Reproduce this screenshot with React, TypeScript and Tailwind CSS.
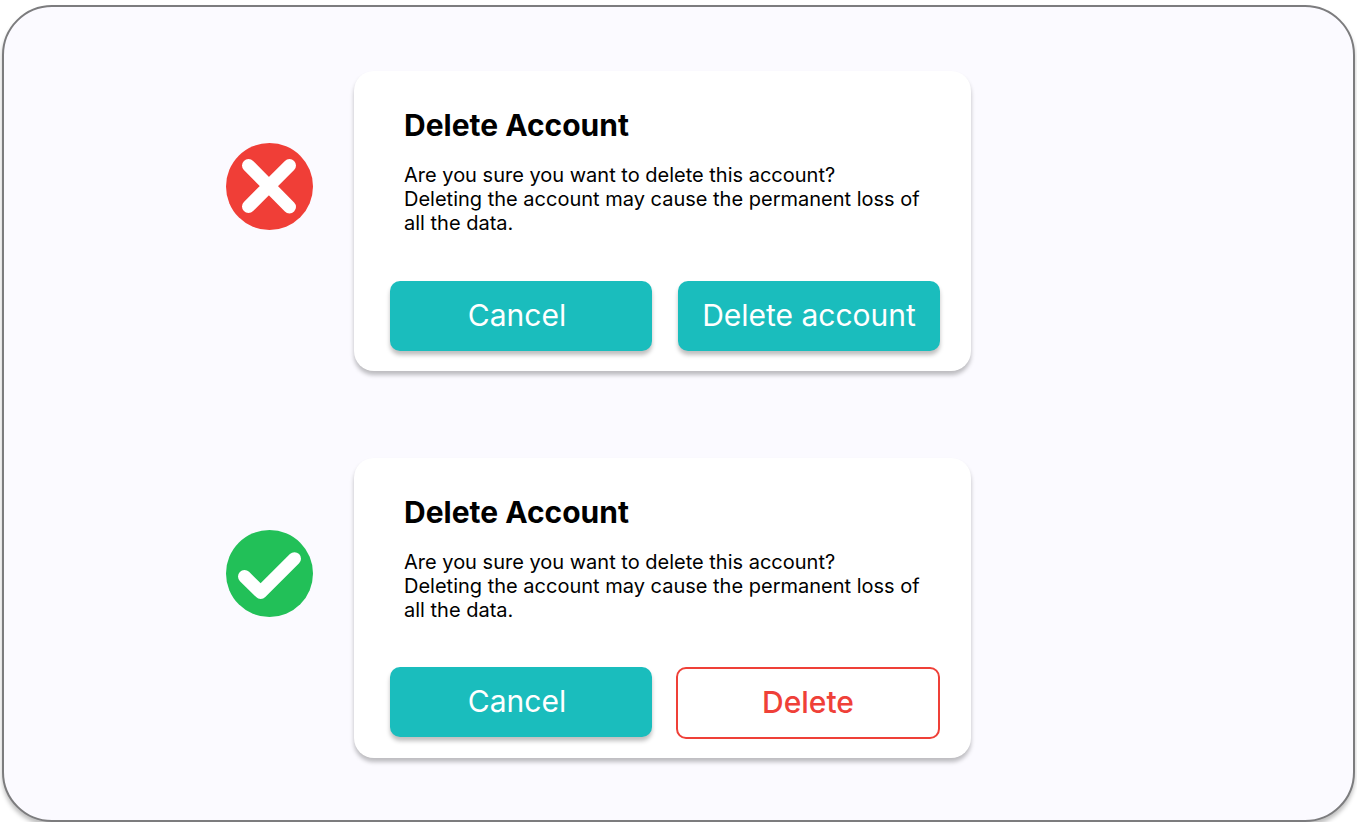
import type { ReactNode } from "react";

function CrossIcon() {
  return (
    <svg viewBox="0 0 87 87" className="mt-[72px] size-[87px] shrink-0" role="img" aria-label="Wrong">
      <circle cx="43.5" cy="43.5" r="43.5" fill="#f03e37" />
      <path d="M22.5 22.5 63.5 64M63.5 22.5 22.5 63.5" fill="none" stroke="#fff" strokeWidth="13" strokeLinecap="round" />
    </svg>
  );
}

function CheckIcon() {
  return (
    <svg viewBox="0 0 87 87" className="mt-[72px] size-[87px] shrink-0" role="img" aria-label="Right">
      <circle cx="43.5" cy="43.5" r="43.5" fill="#22c058" />
      <path
        d="M18.5 46.5 34.7 62.4 68.5 28.7"
        fill="none"
        stroke="#fff"
        strokeWidth="13"
        strokeLinecap="round"
        strokeLinejoin="round"
      />
    </svg>
  );
}

const baseButton = "whitespace-nowrap rounded-[10px] pb-0.5 text-[30px] leading-9";
const solidButton = "h-[70px] bg-[#1abdbd] text-white shadow-[0_4px_4px_rgba(0,0,0,0.25)]";
const outlineButton = "h-[72px] border-2 border-[#ef4038] bg-white font-medium text-[#ef4038]";

function Example({ icon, id, children }: { icon: ReactNode; id: string; children: ReactNode }) {
  return (
    <div className="flex items-start gap-[41px]">
      {icon}
      <section
        aria-labelledby={id}
        className="min-h-[300px] w-full max-w-[617px] rounded-[20px] bg-white pl-9 pr-[31px] pt-9 shadow-[0_4px_4px_rgba(0,0,0,0.25)]"
      >
        <div className="px-3.5">
          <h2 id={id} className="text-[30px] font-bold leading-9">
            Delete Account
          </h2>
          <p className="mt-5 text-xl leading-6">
            Are you sure you want to delete this account?
            <br />
            Deleting the account may cause the permanent loss of all the data.
          </p>
        </div>
        {children}
      </section>
    </div>
  );
}

export default function App() {
  return (
    <div className="flex min-h-screen bg-white pl-0.5 pr-0.5 pt-[5px] font-['Inter',sans-serif] text-black">
      <main className="flex w-full flex-col gap-[87px] rounded-[50px] border-2 border-[#7c7c7e] bg-[#fbfaff] pb-[60px] pl-[222px] pr-10 pt-16 shadow-[0_4px_4px_rgba(0,0,0,0.25)]">
        <Example icon={<CrossIcon />} id="wrong-title">
          <div className="mt-[46px] grid grid-cols-2 items-start gap-[26px]">
            <button type="button" className={`${baseButton} ${solidButton} pr-2`}>Cancel</button>
            <button type="button" className={`${baseButton} ${solidButton}`}>Delete account</button>
          </div>
        </Example>
        <Example icon={<CheckIcon />} id="right-title">
          <div className="mt-[45px] grid grid-cols-[262fr_264fr] items-start gap-6">
            <button type="button" className={`${baseButton} ${solidButton} pr-2`}>Cancel</button>
            <button type="button" className={`${baseButton} ${outlineButton}`}>Delete</button>
          </div>
        </Example>
      </main>
    </div>
  );
}
